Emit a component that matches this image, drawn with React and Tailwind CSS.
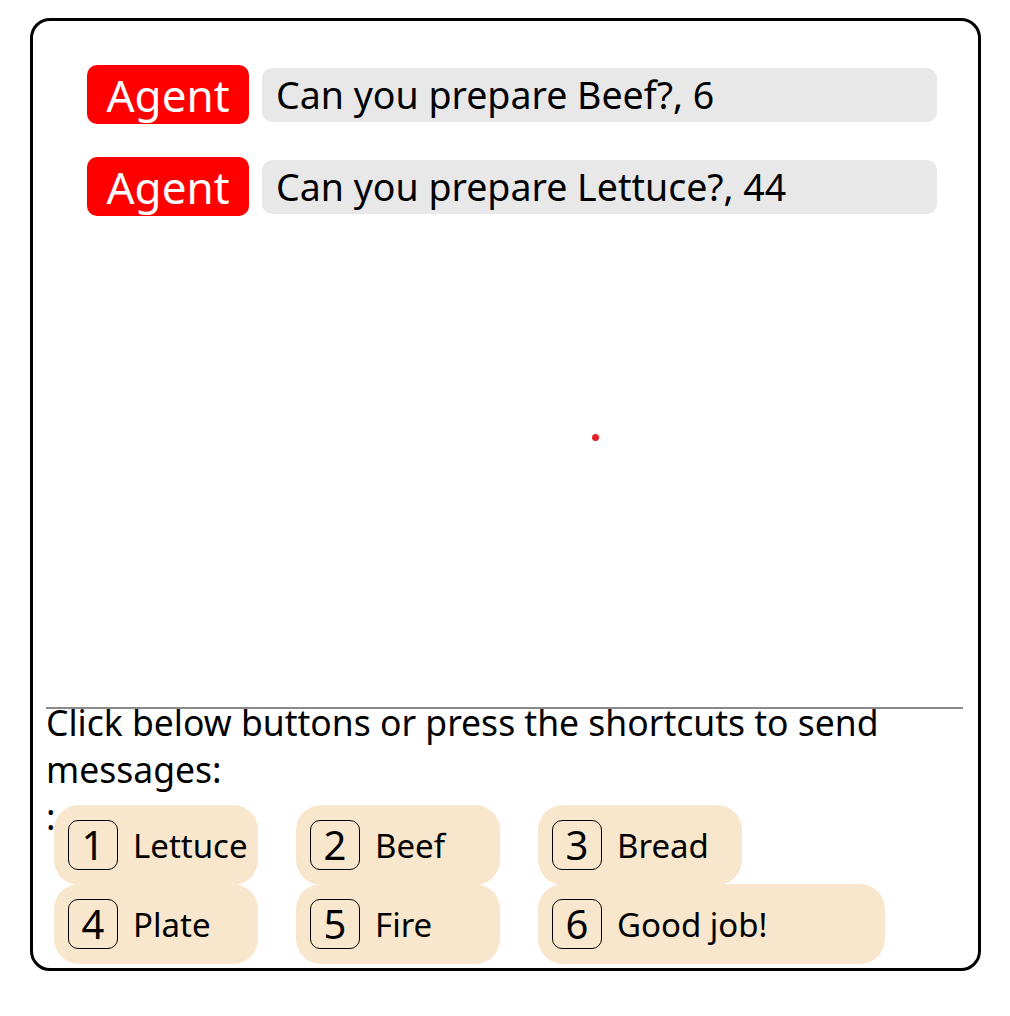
import React from 'react';

const messages = [
  { from: 'Agent', text: 'Can you prepare Beef?, 6' },
  { from: 'Agent', text: 'Can you prepare Lettuce?, 44' },
];

const shortcuts = [
  [
    { key: '1', label: 'Lettuce', w: 'w-[204px]' },
    { key: '2', label: 'Beef', w: 'w-[204px]' },
    { key: '3', label: 'Bread', w: 'w-[204px]' },
  ],
  [
    { key: '4', label: 'Plate', w: 'w-[204px]' },
    { key: '5', label: 'Fire', w: 'w-[204px]' },
    { key: '6', label: 'Good job!', w: 'w-[347px]' },
  ],
];

const ShortcutButton = ({ item }) => (
  <button className={`${item.w} h-[80px] flex items-center gap-[15px] pl-[14px] bg-[#f8e7cc] rounded-[25px] text-black`}>
    <span className="w-[50px] h-[50px] shrink-0 flex items-center justify-center border border-black rounded-[10px] text-[40px] leading-none">
      {item.key}
    </span>
    <span className="text-[33px] leading-none whitespace-nowrap">{item.label}</span>
  </button>
);

export default function App() {
  return (
    <div className="w-[1010px] h-[1016px] bg-white pt-[18px] pl-[30px]" style={{ fontFamily: '"Noto Sans", "Open Sans", sans-serif' }}>
      <div className="relative w-[951px] h-[953px] border-[3px] border-black rounded-[20px] flex flex-col">
        <div className="flex-1 flex flex-col gap-[33px] pt-[44px] pl-[54px] pr-[41px]">
          {messages.map((m, i) => (
            <div key={i} className="flex items-center gap-[13px]">
              <div className="w-[162px] h-[59px] shrink-0 flex items-center justify-center bg-[#ff0000] text-white rounded-[10px] text-[44px] leading-none">
                {m.from}
              </div>
              <div className="flex-1 h-[54px] flex items-center pl-[14px] bg-[#e8e8e8] rounded-[10px] text-[37.5px] leading-none text-black">
                {m.text}
              </div>
            </div>
          ))}
        </div>

        <span className="absolute left-[559px] top-[413px] w-[7px] h-[7px] rounded-full bg-[#e8202a]" />

        <div className="mx-[13px] mr-[15px] border-t-2 border-[#8a8a8a] pb-[4px]">
          <div className="-mt-[10px] text-[35.5px] leading-[47px] text-black">
            Click below buttons or press the shortcuts to send messages:
          </div>
          <div className="text-[35.5px] leading-[47px] text-black">:</div>
          <div className="-mt-[35px] ml-[8px] flex flex-col">
            {shortcuts.map((row, r) => (
              <div key={r} className={`flex gap-[38px] ${r === 1 ? '-mt-[1px]' : ''}`}>
                {row.map((item) => (
                  <ShortcutButton key={item.key} item={item} />
                ))}
              </div>
            ))}
          </div>
        </div>
      </div>
    </div>
  );
}
